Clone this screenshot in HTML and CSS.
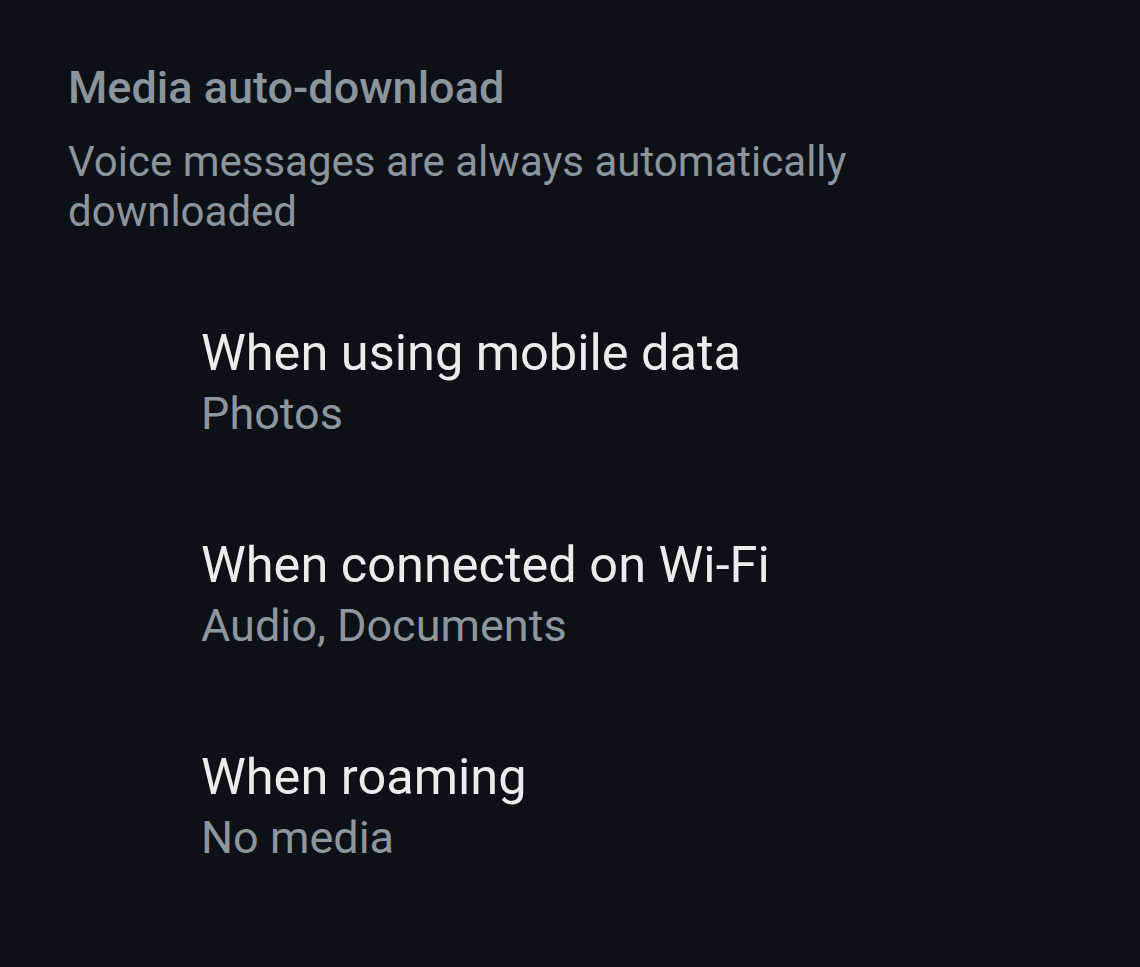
FILE: index.html
```html
<!DOCTYPE html>
<html lang="en">
<head>
    <meta charset="UTF-8">
    <meta name="viewport" content="width=device-width, initial-scale=1.0">
    <title>Media auto-download</title>
    <link rel="stylesheet" href="styles.css">
</head>
<body>
    <div id="container">
        <!-- section header -->
        <div class="section-head">
            <h2 class="section-title">Media auto-download</h2>
            <p class="section-note">Voice messages are always automatically downloaded</p>
        </div>
        <ul class="option-list">
            <li class="option">
                <div class="option-title">When using mobile data</div>
                <div class="option-value">Photos</div>
            </li>
            <li class="option">
                <div class="option-title">When connected on Wi-Fi</div>
                <div class="option-value">Audio, Documents</div>
            </li>
            <li class="option">
                <div class="option-title">When roaming</div>
                <div class="option-value">No media</div>
            </li>
        </ul>
    </div>
</body>
</html>
```

FILE: styles.css
```css
*{
    margin: 0;
    padding: 0;
}
html, body{
    height: 100%;
}
body{
    background-color: #0b1117;
    font-family: Roboto, "Noto Sans", sans-serif;
}
#container{
    padding: 60px 0 0 68px;
}
.section-head{
    width: 820px;
}
.section-title{
    font-size: 45px;
    font-weight: 500;
    line-height: 56px;
    color: #8c949c;
}
.section-note{
    margin-top: 21px;
    font-size: 42px;
    line-height: 50px;
    color: #8c949c;
}
.option-list{
    list-style: none;
    padding-left: 133px;
    margin-top: 86px;
}
.option{
    height: 212px;
}
.option-title{
    font-size: 50.5px;
    line-height: 60px;
    color: #e9edef;
}
.option-value{
    margin-top: 3px;
    font-size: 45px;
    line-height: 56px;
    color: #8e969e;
}
```
